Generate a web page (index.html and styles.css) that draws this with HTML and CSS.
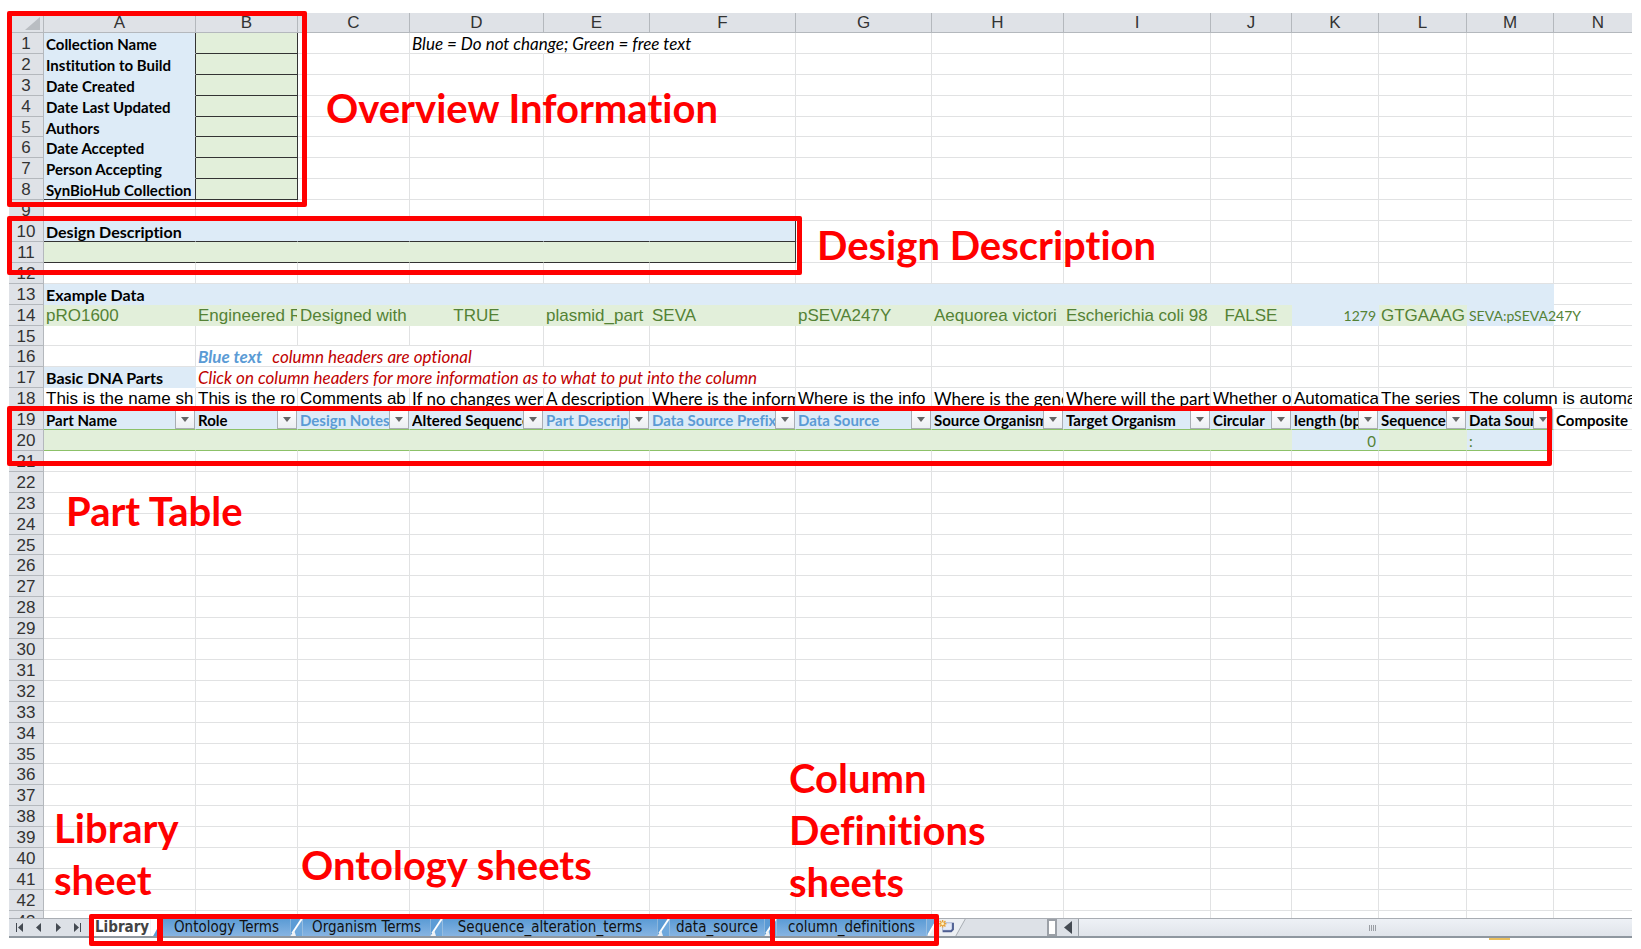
FILE: index.html
```html
<!DOCTYPE html>
<html lang="en">
<head>
<meta charset="utf-8">
<title>Library sheet</title>
<link rel="stylesheet" href="styles.css">
</head>
<body>
<main class="workbook">
  <div class="pane">
    <table class="sheet">
      <colgroup>
        <col class="w-head"><col class="w-a"><col class="w-b"><col class="w-c"><col class="w-d"><col class="w-e"><col class="w-f"><col class="w-g"><col class="w-h"><col class="w-i"><col class="w-j"><col class="w-k"><col class="w-l"><col class="w-m"><col>
      </colgroup>
      <thead><tr id="letters"></tr></thead>
      <tbody id="rows"></tbody>
    </table>
  </div>

  <div class="bar">
    <div class="tabs">
      <div class="nav">
        <button type="button" aria-label="First sheet"><svg width="8" height="9" viewBox="0 0 8 9"><path d="M0 0h1v9H0zM7 0v9L2 4.500z"/></svg></button>
        <button type="button" aria-label="Previous sheet"><svg width="8" height="9" viewBox="0 0 8 9"><path d="M6 0v9L1 4.500z"/></svg></button>
        <button type="button" aria-label="Next sheet"><svg width="8" height="9" viewBox="0 0 8 9"><path d="M2 0v9l5-4.500z"/></svg></button>
        <button type="button" aria-label="Last sheet"><svg width="8" height="9" viewBox="0 0 8 9"><path d="M7 0h1v9H7zM1 0v9l5-4.500z"/></svg></button>
      </div>
      <button type="button" class="tab current">Library</button>
      <svg class="edge" width="13" height="18" viewBox="0 0 13 18"><path fill="#fff" d="M0 0h13L3 18H0z"/><path fill="#5b9bd5" d="M13 0v18H3z"/></svg>
      <button type="button" class="tab medium">Ontology Terms</button>
      <svg class="edge" width="13" height="18" viewBox="0 0 13 18"><use href="#slash"/></svg>
      <button type="button" class="tab medium">Organism Terms</button>
      <svg class="edge" width="13" height="18" viewBox="0 0 13 18"><use href="#slash"/></svg>
      <button type="button" class="tab wide">Sequence_alteration_terms</button>
      <svg class="edge" width="13" height="18" viewBox="0 0 13 18"><use href="#slash"/></svg>
      <button type="button" class="tab narrow">data_source</button>
      <svg class="edge" width="13" height="18" viewBox="0 0 13 18"><use href="#slash"/></svg>
      <button type="button" class="tab large">column_definitions</button>
      <svg class="edge" width="13" height="18" viewBox="0 0 13 18"><path fill="#6fa8dc" d="M0 0h11L1 18H0z"/><path fill="#eceff3" d="M11 0h2v18H1z"/><path d="M12 0L2 17" stroke="#fff" stroke-width="2"/></svg>
      <button type="button" class="insert" aria-label="Insert worksheet"><svg width="28" height="18" viewBox="0 0 28 18"><path d="M0 0h27L17 18H0z" fill="#eceff3"/><path d="M27 0L17 18" stroke="#a4a9af" fill="none"/><path d="M3 4h10v8H3z" fill="#e4eaf8" stroke="#a9b4d4"/><path d="M3 13h9l2-2V4" stroke="#4f5f92" stroke-width="2" fill="none"/><path d="M3 1v8M-1 5h8M0 2l6 6M6 2L0 8" stroke="#e8a33c" stroke-width="1.500"/><circle cx="3" cy="5" r="1.500" fill="#fff3c4"/></svg></button>
    </div>
    <div class="scroller">
      <span class="splitter"></span>
      <button type="button" class="left" aria-label="Scroll left"><svg width="8" height="13" viewBox="0 0 8 13"><path d="M8 0v13L0 6.500z"/></svg></button>
      <div class="thumb"><svg width="7" height="6" viewBox="0 0 7 6"><path d="M.5 0v6M2.500 0v6M4.500 0v6M6.500 0v6" stroke="#9a9ea4"/></svg></div>
    </div>
  </div>
  <div class="status"><span></span></div>

  <svg class="defs" width="0" height="0" aria-hidden="true"><defs><g id="slash"><path fill="#5b9bd5" d="M0 0h13L3 18H0z"/><path fill="#6fa8dc" d="M13 0v18H1z"/><path d="M12 0L2 15" stroke="#fff" stroke-width="2"/><path d="M0 18l4-6 2 6z" fill="#eef1f4"/></g></defs></svg>

  <div class="frame f-overview"></div>
  <div class="frame f-design"></div>
  <div class="frame f-parts"></div>
  <div class="frame f-library"></div>
  <div class="frame f-ontology"></div>
  <div class="frame f-columns"></div>
  <p class="note n-overview">Overview Information</p>
  <p class="note n-design">Design Description</p>
  <p class="note n-parts">Part Table</p>
  <p class="note n-library">Library<br>sheet</p>
  <p class="note n-ontology">Ontology sheets</p>
  <p class="note n-columns">Column<br>Definitions<br>sheets</p>
</main>
<script src="sheet.js"></script>
</body>
</html>
```
FILE: styles.css
```css
* { box-sizing: border-box; }

body {
  margin: 0;
  background: #fff;
  font-family: "Liberation Sans", Arial, sans-serif;
  font-variant-ligatures: none;
}

button {
  margin: 0;
  padding: 0;
  border: 0;
  background: none;
  font: inherit;
  color: inherit;
}

.workbook {
  position: relative;
  display: flex;
  flex-direction: column;
  height: 100vh;
  padding: 13px 9px 0;
  overflow: hidden;
}

.pane {
  flex: 1;
  min-height: 0;
  overflow: hidden;
}

.sheet {
  width: 100%;
  table-layout: fixed;
  border-collapse: separate;
  border-spacing: 0;
  font-size: 17px;
}

.w-head { width: 35px; }
.w-a { width: 152px; }
.w-b { width: 102px; }
.w-c { width: 112px; }
.w-d { width: 134px; }
.w-e { width: 106px; }
.w-f { width: 146px; }
.w-g { width: 136px; }
.w-h { width: 132px; }
.w-i { width: 147px; }
.w-j { width: 81px; }
.w-k { width: 87px; }
.w-l { width: 88px; }
.w-m { width: 87px; }

th, td {
  padding: 0;
  border: 0 solid #e1e2e3;
  border-width: 0 1px 1px 0;
  vertical-align: top;
  white-space: nowrap;
}

th {
  padding-top: 2px;
  background: #dfe2e7;
  border-color: #b4b8bd;
  color: #333;
  font-weight: 400;
  line-height: 18px;
}

thead th {
  height: 20px;
  padding-top: 1px;
}

th.last, td.last { border-right: 0; }
th.last { padding-left: 10px; }

.corner svg {
  display: block;
  margin: 3px 3px 0 auto;
}

.cell {
  height: 20px;
  padding: 0 2px;
  overflow: hidden;
  line-height: 22px;
}

tbody tr:nth-child(10n + 5) .cell { height: 19px; }
tbody tr:nth-child(10n + 5) th { line-height: 17px; }

.spill .cell { overflow: visible; }
.open { border-right-color: transparent; }

.body .cell {
  font-family: Lato, "Open Sans", sans-serif;
  font-size: 15px;
}

.body.title .cell { font-size: 16px; }
.body.text .cell { font-size: 17px; }
.body.small .cell { font-size: 14px; }

.bold { font-weight: 700; }
.italic { font-style: italic; }
.center { text-align: center; }
.right { text-align: right; }

.blue { background: #ddebf7; border-color: #ddebf7; }
.green { background: #e2efda; border-color: #e2efda; }
.leaf { color: #548235; }
.sky { color: #5b9bd5; }
.red { color: #c00000; }
.gap { margin-left: 6px; }

.line-r { border-right-color: #333; }
.line-b { border-bottom-color: #333; }
.line-g { border-bottom-color: #8cc168; }

.cell input {
  display: block;
  width: 100%;
  height: 100%;
  padding: 0;
  border: 0;
  outline: 0;
  background: transparent;
  font: inherit;
}

.cell.filtered {
  display: flex;
  padding-right: 0;
}

.filtered span {
  flex: 1;
  min-width: 0;
  overflow: hidden;
}

.filter {
  flex: 0 0 20px;
  height: 20px;
  border: 1px solid #a9adb3;
  background: linear-gradient(#fff, #eceef2);
}

.filter svg { display: block; margin: auto; }

.bar {
  display: flex;
  height: 20px;
  border-top: 1px solid #a9adb3;
  border-bottom: 2px solid #8f979f;
  background: #dde1e7;
}

.tabs {
  display: flex;
  flex: 0 0 1038px;
  font-family: "DejaVu Sans Condensed", "Noto Sans", sans-serif;
  font-size: 15px;
}

.nav {
  display: flex;
  align-items: center;
  justify-content: space-between;
  width: 80px;
  padding: 0 8px 0 7px;
}

.nav button { display: flex; }
.nav svg, .left svg { fill: #444a52; }

.tab {
  height: 17px;
  background: linear-gradient(#5b9bd5, #86b4e2);
  color: #111;
  line-height: 17px;
  text-align: center;
  white-space: nowrap;
}

.edge { flex: 0 0 13px; height: 17px; }

.tab.current {
  width: 61px;
  padding-left: 6px;
  background: #fff;
  color: #444;
  font-weight: 700;
  text-align: left;
}

.medium { width: 127px; }
.wide { width: 214px; }
.narrow { width: 94px; }
.large { width: 149px; }

.insert svg { display: block; height: 17px; }

.scroller {
  display: flex;
  flex: 1;
}

.splitter {
  width: 10px;
  border: 2px solid #9ba0a7;
  background: #fff;
}

.left {
  display: flex;
  align-items: center;
  justify-content: center;
  width: 21px;
}

.thumb {
  display: flex;
  flex: 1;
  align-items: center;
  justify-content: center;
  padding-left: 34px;
  border-left: 1px solid #9ba1a8;
  background: linear-gradient(#eef1f6, #e0e4ea);
}

.status {
  display: flex;
  justify-content: flex-end;
  height: 11px;
  padding-right: 122px;
}

.status span {
  width: 21px;
  height: 2px;
  background: #eabf5d;
}

.defs { position: absolute; }

.frame {
  position: absolute;
  border: 5px solid #f00;
  border-radius: 2px;
  pointer-events: none;
}

.f-overview { left: 7px; top: 11px; width: 300px; height: 196px; }
.f-design { left: 7px; top: 216px; width: 795px; height: 59px; }
.f-parts { left: 7px; top: 406px; width: 1545px; height: 60px; }
.f-library { left: 89px; top: 914px; width: 73px; height: 32px; }
.f-ontology { left: 158px; top: 914px; width: 617px; height: 32px; }
.f-columns { left: 770px; top: 914px; width: 169px; height: 32px; }

.note {
  position: absolute;
  margin: 0;
  color: #f00;
  font-family: Lato, "Open Sans", sans-serif;
  font-size: 40px;
  font-weight: 700;
  line-height: 52px;
  white-space: nowrap;
}

.n-overview { left: 326px; top: 82px; }
.n-design { left: 817px; top: 219px; }
.n-parts { left: 66px; top: 485px; }
.n-library { left: 54px; top: 802px; }
.n-ontology { left: 301px; top: 839px; }
.n-columns { left: 789px; top: 752px; }
```
FILE: sheet.js
```js
const LETTERS = 'ABCDEFGHIJKLMN';
const ROWS = 43;
const cells = {};

function put(ref, cls, html, inner) {
  const c = cells[ref] || (cells[ref] = { cls: '', html: '', inner: '' });
  c.cls += ' ' + cls;
  if (html !== undefined) c.html = html;
  if (inner) c.inner = inner;
}

function fill(from, to, row, cls) {
  for (let i = LETTERS.indexOf(from); i <= LETTERS.indexOf(to); i++) put(LETTERS[i] + row, cls);
}

// Overview block
['Collection Name', 'Institution to Build', 'Date Created', 'Date Last Updated', 'Authors',
  'Date Accepted', 'Person Accepting', 'SynBioHub Collection'].forEach((name, i) => {
  const n = i + 1;
  put('A' + n, 'blue body bold line-r' + (n === 8 ? ' line-b' : ''), `<label for="b${n}">${name}</label>`);
  put('B' + n, 'green line-r line-b', `<input id="b${n}" type="text">`);
});
put('D1', 'body text italic spill open', 'Blue = Do not change; Green = free text');
put('E1', 'open');

// Design description
fill('A', 'F', 9, 'line-b');
fill('A', 'F', 10, 'blue line-b');
put('A10', 'body title bold', '<label for="design">Design Description</label>');
fill('A', 'F', 11, 'green line-b');
put('A11', '', '<input id="design" type="text">');
put('F10', 'line-r');
put('F11', 'line-r');

// Example data
fill('A', 'M', 13, 'blue');
put('A13', 'body title bold', 'Example Data');
fill('A', 'J', 14, 'green leaf');
put('L14', 'green leaf', 'GTGAAAG');
put('K14', 'blue leaf body small right', '1279');
put('M14', 'blue leaf body small spill', 'SEVA:pSEVA247Y');
put('A14', '', 'pRO1600');
put('B14', '', 'Engineered R');
put('C14', '', 'Designed with');
put('D14', 'center', 'TRUE');
put('E14', '', 'plasmid_part');
put('F14', '', 'SEVA');
put('G14', '', 'pSEVA247Y');
put('H14', '', 'Aequorea victori');
put('I14', '', 'Escherichia coli 98');
put('J14', 'center', 'FALSE');

// Hints
put('B16', 'body text italic spill open', '<b class="sky">Blue text</b> <span class="red gap">column headers are optional</span>');
put('C16', 'open');
put('A17', 'blue body title bold', 'Basic DNA Parts');
put('B17', 'body text italic red spill open', 'Click on column headers for more information as to what to put into the column');
fill('C', 'E', 17, 'open');

const help = ['This is the name sh', 'This is the ro', 'Comments ab', 'If no changes wer', 'A description o',
  'Where is the inform', 'Where is the info', 'Where is the gene', 'Where will the part', 'Whether o',
  'Automatica', 'The series', 'The column is automatically'];
help.forEach((text, i) => put(LETTERS[i] + 18, 'DEFHI'.includes(LETTERS[i]) ? 'body text' : '', text));
put('M18', 'spill open');

// Part table
const arrow = '<svg width="8" height="5" viewBox="0 0 8 5"><path d="M0 0h8L4 5z" fill="#666"/></svg>';
const heads = ['Part Name', 'Role', 'Design Notes', 'Altered Sequence', 'Part Description', 'Data Source Prefix', 'Data Source',
  'Source Organism', 'Target Organism', 'Circular', 'length (bp)', 'Sequence', 'Data Source'];
heads.forEach((text, i) => put(LETTERS[i] + 19, 'blue body bold line-g' + ('CEFG'.includes(LETTERS[i]) ? ' sky' : ''),
  `<span>${text}</span><button type="button" class="filter" aria-label="Filter ${text}">${arrow}</button>`, 'filtered'));
put('N19', 'body bold', 'Composite');
fill('A', 'M', 20, 'leaf');
fill('A', 'J', 20, 'green line-g');
put('L20', 'green line-g');
put('K20', 'blue body right line-g', '0');
put('M20', 'blue body line-g', ':');

document.getElementById('letters').innerHTML =
  '<th class="corner"><svg width="15" height="13" viewBox="0 0 15 13"><path d="M15 0v13H0z" fill="#b9bdc2"/></svg></th>' +
  [...LETTERS].map(l => `<th scope="col"${l === 'N' ? ' class="last"' : ''}>${l}</th>`).join('');

let html = '';
for (let r = 1; r <= ROWS; r++) {
  html += `<tr><th scope="row">${r}</th>`;
  for (const l of LETTERS) {
    const c = cells[l + r] || { cls: '', html: '', inner: '' };
    html += `<td class="${(c.cls + (l === 'N' ? ' last' : '')).trim()}"><div class="cell ${c.inner}">${c.html}</div></td>`;
  }
  html += '</tr>';
}
document.getElementById('rows').innerHTML = html;
```
